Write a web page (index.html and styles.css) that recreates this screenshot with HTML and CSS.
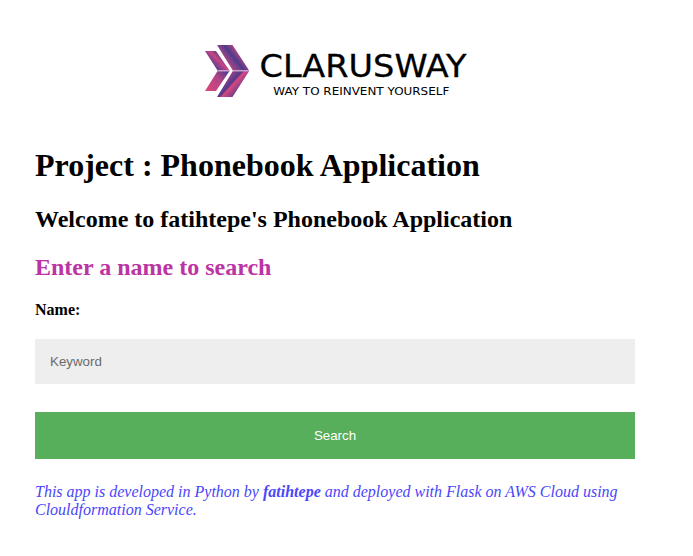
FILE: index.html
```html
<!DOCTYPE html>
<html lang="en">
<head>
<meta charset="utf-8">
<title>Phonebook Application</title>
<link rel="stylesheet" href="styles.css">
</head>
<body>
<main class="container">
  <svg class="logo" width="264" height="56" viewBox="203 43 264 56" role="img" aria-label="Clarusway">
    <defs>
      <linearGradient id="top" gradientUnits="userSpaceOnUse" x1="211" y1="66" x2="222" y2="55">
        <stop offset="0" stop-color="#4b3b8e"/><stop offset=".45" stop-color="#a04288"/><stop offset=".6" stop-color="#c84582"/><stop offset="1" stop-color="#4d3b8d"/>
      </linearGradient>
      <linearGradient id="bigTop" gradientUnits="userSpaceOnUse" x1="225" y1="65" x2="240" y2="53">
        <stop offset="0" stop-color="#c8457f"/><stop offset=".45" stop-color="#74408c"/><stop offset=".6" stop-color="#4d3b8b"/><stop offset="1" stop-color="#bb4482"/>
      </linearGradient>
      <linearGradient id="bottom" gradientUnits="userSpaceOnUse" x1="207" y1="91" x2="226" y2="71">
        <stop offset="0" stop-color="#d9477d"/><stop offset=".6" stop-color="#b44484"/><stop offset="1" stop-color="#553b8d"/>
      </linearGradient>
      <linearGradient id="bigBottom" gradientUnits="userSpaceOnUse" x1="227" y1="79" x2="238" y2="89">
        <stop offset="0" stop-color="#8d408a"/><stop offset=".4" stop-color="#54398a"/><stop offset=".55" stop-color="#d8477f"/><stop offset="1" stop-color="#7e4088"/>
      </linearGradient>
    </defs>
    <path fill="url(#top)" d="M205 51H216L229.7 70.8H217.7Z"/>
    <path fill="url(#bottom)" d="M205 91H216L229.7 70.8H217.7Z"/>
    <path fill="url(#bigTop)" d="M217 45H232.5L249.3 70.8H233Z"/>
    <path fill="url(#bigBottom)" d="M217 97H232.5L249.3 70.8H233Z"/>
    <path stroke="#c8a0cb" stroke-width="1.6" d="M217.5 70.8H229.5M232.8 70.8H249"/>
    <text class="brand" x="259.5" y="77.3" textLength="207" lengthAdjust="spacingAndGlyphs">CLARUSWAY</text>
    <text class="tagline" x="273.3" y="94.8" textLength="176" lengthAdjust="spacingAndGlyphs">WAY TO REINVENT YOURSELF</text>
  </svg>
  <h1>Project : Phonebook Application</h1>
  <h2>Welcome to fatihtepe's Phonebook Application</h2>
  <h2 class="prompt">Enter a name to search</h2>
  <form>
    <label for="keyword">Name:</label>
    <input id="keyword" type="text" placeholder="Keyword">
    <button type="button">Search</button>
  </form>
  <p class="credit">This app is developed in Python by <b>fatihtepe</b> and deployed with Flask on AWS Cloud using Clouldformation Service.</p>
</main>
</body>
</html>
```
FILE: styles.css
```css
body {
  margin: 0;
  background: #fff;
  color: #000;
  font-family: "Liberation Serif", "Times New Roman", serif;
}

.container {
  width: 600px;
  margin-left: 35px;
  padding-top: 43px;
}

.logo {
  display: block;
  margin: 0 auto 48px 168px;
}

.brand,
.tagline {
  font-family: "DejaVu Sans", Verdana, sans-serif;
}

.brand {
  font-size: 31.5px;
  stroke: #000;
  stroke-width: 0.3px;
}

.tagline { font-size: 11.3px; }

h1 {
  margin: 0 0 21px;
  font-size: 32px;
  line-height: 37px;
}

h2 {
  margin: 0 0 20px;
  font-size: 24px;
  line-height: 28px;
}

.prompt { color: #bc34a4; }

label {
  display: block;
  margin-bottom: 20px;
  font-weight: bold;
  font-size: 16px;
  line-height: 18px;
}

input,
button {
  display: block;
  box-sizing: border-box;
  width: 100%;
  border: 0;
  font: 13.33px "Liberation Sans", Arial, sans-serif;
}

input {
  height: 45px;
  margin-bottom: 28px;
  padding: 15px;
  background: #eee;
}

input::placeholder { color: #6c6c6c; }

button {
  height: 47px;
  background: #57ae5b;
  color: #fff;
}

.credit {
  margin: 24px 0 0;
  color: #4a46fa;
  font-style: italic;
  font-size: 16px;
  line-height: 18px;
}
```
